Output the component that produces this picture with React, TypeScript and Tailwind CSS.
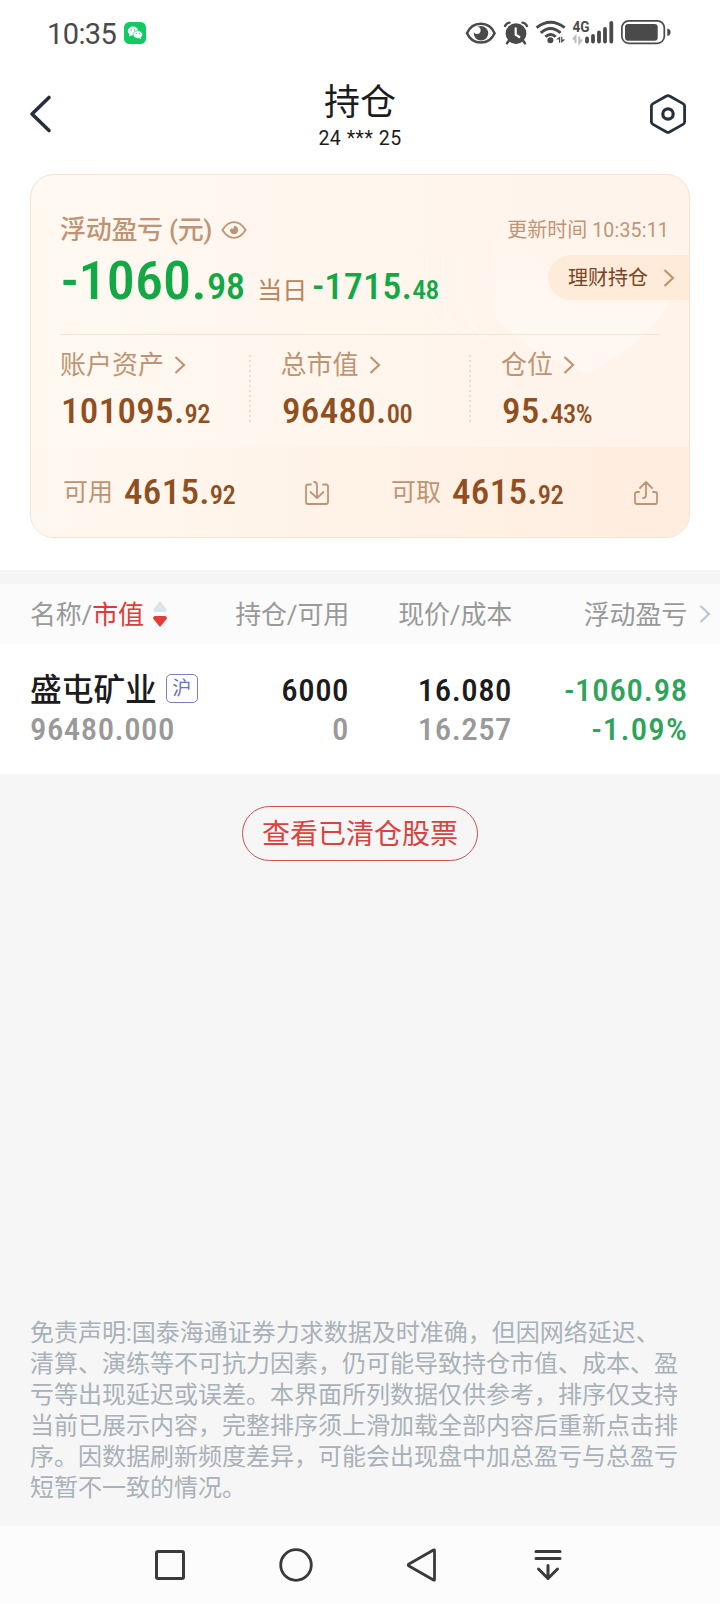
import type { ReactNode } from "react";

interface AmountProps {
  int: string;
  dec: string;
}

const disclaimer = [
  "免责声明:国泰海通证券力求数据及时准确，但因网络延迟、",
  "清算、演练等不可抗力因素，仍可能导致持仓市值、成本、盈",
  "亏等出现延迟或误差。本界面所列数据仅供参考，排序仅支持",
  "当前已展示内容，完整排序须上滑加载全部内容后重新点击排",
  "序。因数据刷新频度差异，可能会出现盘中加总盈亏与总盈亏",
  "短暂不一致的情况。",
];

const positions = [
  {
    name: "盛屯矿业",
    market: "沪",
    value: "96480.000",
    held: "6000",
    available: "0",
    price: "16.080",
    cost: "16.257",
    profit: "-1060.98",
    rate: "-1.09%",
  },
];

function Chevron({ className }: { className: string }) {
  return (
    <svg className={className} width="12" height="20" viewBox="0 0 12 20" fill="none" stroke="currentColor" strokeWidth="2.2">
      <path d="M1.5 2 L10 10 L1.5 18" />
    </svg>
  );
}

function StatusIcons() {
  return (
    <svg width="208" height="28" viewBox="0 0 208 28" fill="none" stroke="#4a4a4a">
      {/* Eye comfort */}
      <path d="M3 15.2 C8.5 2.6 25.2 2.6 30.6 15.2 C25.2 27.6 8.5 27.6 3 15.2 Z" strokeWidth="2.5" />
      <circle cx="17" cy="15.3" r="7.2" fill="#4a4a4a" stroke="none" />
      <circle cx="13" cy="12.3" r="3.6" fill="#fff" stroke="none" />

      {/* Alarm */}
      <circle cx="52" cy="15.6" r="10.4" fill="#4a4a4a" stroke="none" />
      <path d="M41 8 Q42.5 5 45.5 4.6 M63 8 Q61.5 5 58.5 4.6 M45 22.5 L43 25.3 M59 22.5 L61 25.3" strokeWidth="2.4" strokeLinecap="round" />
      <path d="M51.7 10.3 V16.6 L55.3 19" stroke="#fff" strokeWidth="2.2" strokeLinecap="round" />

      {/* Wifi */}
      <path d="M72.6 9.6 Q86.5 -1.2 100.6 9.6 M76.8 14.8 Q86.5 6.2 96.6 14.8 M81.4 18.8 Q86.5 14 91.8 18.8" strokeWidth="2.9" />
      <circle cx="86.4" cy="22.2" r="3" fill="#4a4a4a" stroke="none" />
      <path d="M92.3 21.6 L96.2 18.3 V24.8 H95 V21.6 Z M97.2 18.8 H98.3 V21.6 H101.3 L97.2 25 Z" fill="#4a4a4a" stroke="none" />

      {/* Mobile signal */}
      <text x="108.5" y="14" textLength="17" lengthAdjust="spacingAndGlyphs" fill="#4a4a4a" stroke="none" className="font-['Roboto',sans-serif] text-[15.5px] font-bold">
        4G
      </text>
      <path d="M111.5 25 V18.5 L109 21.5 M115.3 18.5 V25 L118 21.5" stroke="#bdbdbd" strokeWidth="2" />
      <path d="M123 20.5 V23.6 M129 18 V23.6 M135 14.5 V23.6 M141 11 V23.6 M147.3 4.8 V23.6" strokeWidth="3.8" strokeLinecap="round" />

      {/* Battery */}
      <rect x="157.9" y="2.9" width="42.4" height="22.4" rx="7" strokeWidth="1.7" />
      <rect x="161" y="6" width="32.7" height="16.7" rx="3" fill="#4a4a4a" stroke="none" />
      <path d="M203.3 10.5 Q206.6 11 206.6 14 Q206.6 17.5 203.3 18 Z" fill="#4a4a4a" stroke="none" />
    </svg>
  );
}

function StatusBar() {
  return (
    <div className="flex h-[68px] items-center pl-[47px] pr-12 text-[#4a4a4a]">
      <span className="w-[77px] text-[29px] leading-[68px] tracking-[-0.6px]">10:35</span>
      <svg className="mb-0.5 shrink-0" width="22" height="22" viewBox="0 0 22 22">
        <rect width="22" height="22" rx="5.5" fill="#0fcb62" />
        <ellipse cx="9" cy="9" rx="5.3" ry="4.4" fill="#fff" />
        <path d="M5.5 12 L5 14.6 L8 13 Z" fill="#fff" />
        <ellipse cx="13.8" cy="12.6" rx="4.7" ry="3.9" fill="#fff" stroke="#0fcb62" strokeWidth="0.7" />
        <path d="M15 16 L17 17.3 L16.8 15 Z" fill="#fff" />
        <g fill="#0fcb62">
          <circle cx="7.2" cy="7.9" r="0.7" />
          <circle cx="10.6" cy="7.9" r="0.7" />
          <circle cx="12.3" cy="11.6" r="0.6" />
          <circle cx="15.3" cy="11.6" r="0.6" />
        </g>
      </svg>
      <div className="mb-1 ml-auto">
        <StatusIcons />
      </div>
    </div>
  );
}

function Header() {
  return (
    <header className="mb-3.5 flex h-[92px] items-center justify-between pl-7 pr-8 text-[#26303a]">
      <svg width="40" height="40" viewBox="0 0 40 40" fill="none" stroke="currentColor" strokeWidth="3.6" strokeLinecap="round" strokeLinejoin="round">
        <path d="M21 3.5 L4 20 L21 36.5" />
      </svg>
      <div className="flex flex-col items-center pl-1 pt-1.5 text-[#1c1c1c]">
        <h1 className="text-[36px] leading-10">持仓</h1>
        <p className="mt-1 text-[19.5px] leading-6 tracking-[0.5px]">24 *** 25</p>
      </div>
      <svg width="40" height="44" viewBox="0 0 40 44" fill="none" stroke="currentColor" strokeWidth="2.8" strokeLinejoin="round">
        <path d="M18.5 4 Q20 3.1 21.5 4 L35 11.6 Q36.6 12.5 36.6 14.2 V29.8 Q36.6 31.5 35 32.4 L21.5 40 Q20 40.9 18.5 40 L5 32.4 Q3.4 31.5 3.4 29.8 V14.2 Q3.4 12.5 5 11.6 Z" />
        <circle cx="20" cy="22" r="5.2" strokeWidth="3.2" />
      </svg>
    </header>
  );
}

function Amount({ int, dec }: AmountProps) {
  return (
    <span className="inline-block origin-left scale-x-[1.06] whitespace-nowrap text-[35px] font-medium leading-10 tracking-[0.25px] text-[#8f4f20] [font-stretch:75%]">
      {int}.<span className="text-[25px] tracking-[-0.5px]">{dec}</span>
    </span>
  );
}

function Stat({ label, children }: { label: string; children: ReactNode }) {
  return (
    <div className="w-[220.5px] shrink-0">
      <div className="flex items-center text-[26px] leading-9 text-[#bf9474]">
        {label}
        <Chevron className="ml-2.5" />
      </div>
      <div className="mt-[9px] flex h-10 pl-px">{children}</div>
    </div>
  );
}

function DottedLine() {
  return (
    <svg className="-ml-8 mr-[30px] mt-[7px] shrink-0" width="2" height="68" viewBox="0 0 2 68">
      <path d="M1 1 V68" stroke="#eddccb" strokeWidth="2" strokeDasharray="2 3" />
    </svg>
  );
}

function SummaryCard() {
  return (
    <section className="relative mx-[30px] h-[364px] overflow-hidden rounded-3xl border border-[#f3e4cd] bg-gradient-to-r from-[#fff9f1] to-[#fff3ea]">
      {/* Background shield */}
      <svg className="absolute left-[390px] top-10" width="268" height="180" viewBox="0 0 268 180" fill="none">
        <defs>
          <linearGradient id="shield" x1="0" y1="0" x2="0" y2="1">
            <stop offset="0" stopColor="#fff7f0" stopOpacity="0" />
            <stop offset="0.6" stopColor="#fff7f1" />
          </linearGradient>
        </defs>
        <path d="M70 0 V85 Q74 125 165 158 Q240 125 260 60 V0 Z" fill="url(#shield)" />
        <path d="M42 40 V82 Q44 110 66 124 M22 40 V82 Q24 108 46 120 M6 40 V78 Q8 100 26 116" stroke="#fff9f4" strokeWidth="1.5" />
      </svg>

      <div className="relative pl-[29px] pt-[35px]">
        <div className="flex h-10 items-center text-[#bf9474]">
          <span className="w-[161px] whitespace-nowrap text-[26px] font-medium leading-10 tracking-[-0.3px]">浮动盈亏 (元)</span>
          <svg width="26" height="20" viewBox="0 0 28 20" fill="none" stroke="currentColor" strokeWidth="2">
            <path d="M1.5 10 Q7 1.5 14 1.5 Q21 1.5 26.5 10 Q21 18.5 14 18.5 Q7 18.5 1.5 10 Z" />
            <path d="M14 5.5 A4.5 4.5 0 1 1 9.5 10 L11 8.5 Q14 9.5 14 5.5 Z" fill="currentColor" stroke="none" />
          </svg>
          <span className="ml-auto mr-5 text-[20px] leading-10">更新时间 <span className="text-[19.5px] tracking-[0.2px]">10:35:11</span></span>
        </div>

        <div className="flex h-[84px]">
          <p className="origin-left scale-x-[1.06] whitespace-nowrap pl-px text-[53px] font-medium leading-[63px] tracking-[0.1px] text-[#12a846] [font-stretch:75%]">
            -1060.<span className="text-[36.5px] tracking-[-0.7px]">98</span>
            <span className="ml-3 text-[24px] font-normal tracking-[-0.4px] text-[#b5875f]">当日</span>
            <span className="ml-[5px] text-[36px] tracking-[0.2px]">-1715.</span>
            <span className="text-[26px] tracking-[-0.5px]">48</span>
          </p>
          <div className="ml-auto mt-[5px] flex h-[45px] w-[141px] items-center rounded-l-full bg-[#ffebd9] pl-5 text-[20px] text-[#7a4524]">
            理财持仓
            <Chevron className="ml-[15px] text-[#c4926c]" />
          </div>
        </div>

        <div className="mr-[29px] h-px bg-[#f2e3d3]" />

        <div className="flex h-28 pt-3">
          <Stat label="账户资产">
            <Amount int="101095" dec="92" />
          </Stat>
          <DottedLine />
          <Stat label="总市值">
            <Amount int="96480" dec="00" />
          </Stat>
          <DottedLine />
          <Stat label="仓位">
            <Amount int="95" dec="43%" />
          </Stat>
        </div>
      </div>

      <div className="relative flex h-[91px] items-center bg-gradient-to-r from-[#fff8f0] to-[#ffeddf] pl-8 text-[25px] text-[#bf9474]">
        <div className="flex w-[241px] items-center">
          <span className="mr-[11px]">可用</span>
          <span className="flex pt-1"><Amount int="4615" dec="92" /></span>
        </div>
        <svg width="26" height="26" viewBox="0 0 26 26" fill="none" stroke="currentColor" strokeWidth="1.8" strokeLinecap="round" strokeLinejoin="round">
          <path d="M7 4.5 H4 Q2 4.5 2 6.5 V22 Q2 24 4 24 H22 Q24 24 24 22 V6.5 Q24 4.5 22 4.5 H19 M10 2 Q13 2 13 5 V18 M6.5 12 L13 18 L19.5 12" />
        </svg>
        <div className="ml-[61px] flex w-[242px] items-center">
          <span className="mr-[11px]">可取</span>
          <span className="flex pt-1"><Amount int="4615" dec="92" /></span>
        </div>
        <svg width="26" height="26" viewBox="0 0 26 26" fill="none" stroke="currentColor" strokeWidth="1.8" strokeLinecap="round" strokeLinejoin="round">
          <path d="M6 12 H4 Q2 12 2 14 V22 Q2 24 4 24 H22 Q24 24 24 22 V14 Q24 12 22 12 H20 M13 2 V15 Q13 18 10 18 M7 8 L13 2 L19 8" />
        </svg>
      </div>
    </section>
  );
}

function PositionTable() {
  return (
    <section className="mt-8 border-t-[14px] border-[#f5f5f5] bg-white">
      <div className="flex h-[60px] items-center bg-[#fbfbfb] pl-[30px] pt-0.5 text-[26px] tracking-[-0.2px] text-[#999999]">
        <div className="flex w-[158px] items-center">
          <span>名称/<span className="text-[#e03a3a]">市值</span></span>
          <svg className="mb-0.5 ml-[9px] shrink-0" width="14" height="26" viewBox="0 0 14 26">
            <path d="M7 0 L14 9 Q14 11 12 11 H2 Q0 11 0 9 Z" fill="#dde3e8" />
            <path d="M7 26 L0 17.5 Q0 15 2 15 H12 Q14 15 14 17.5 Z" fill="#e63a3a" />
          </svg>
        </div>
        <span className="w-[161px] text-right">持仓/可用</span>
        <span className="w-[163px] text-right">现价/成本</span>
        <span className="w-[175px] text-right">浮动盈亏</span>
        <Chevron className="mb-0.5 ml-3 text-[#b9c8d8]" />
      </div>

      {positions.map((p) => (
        <div key={p.name} className="flex h-[130px] pl-[30px] pt-[27px] text-[31px] font-medium leading-[39px] tracking-[0.45px] text-[#1c1c1c] [font-stretch:75%]">
          <div className="w-[178px]">
            <div className="flex h-[39px] items-center">
              <span className="whitespace-nowrap text-[31.7px] tracking-normal">{p.name}</span>
              <span className="mb-1 ml-[9px] flex h-[29px] w-8 shrink-0 items-center justify-center rounded-[5px] border border-[#7a7fc4] text-[19px] font-normal leading-none tracking-normal text-[#6a6fc8]">
                {p.market}
              </span>
            </div>
            <div className="origin-left scale-x-[1.06] text-[#999999]">{p.value}</div>
          </div>
          <div className="w-[141px] origin-right scale-x-[1.06] text-right">
            <div>{p.held}</div>
            <div className="text-[#999999]">{p.available}</div>
          </div>
          <div className="w-[163px] origin-right scale-x-[1.06] text-right">
            <div>{p.price}</div>
            <div className="text-[#999999]">{p.cost}</div>
          </div>
          <div className="w-44 origin-right scale-x-[1.06] text-right text-[#2fa35a]">
            <div className="tracking-[0.7px]">{p.profit}</div>
            <div className="tracking-[1.1px]">{p.rate}</div>
          </div>
        </div>
      ))}
    </section>
  );
}

function NavBar() {
  return (
    <nav className="flex h-[78px] items-center gap-[86px] bg-[#fcfcfc] pl-[150px] text-[#3a3a3a]">
      <svg width="40" height="40" viewBox="0 0 40 40" fill="none" stroke="currentColor" strokeWidth="3">
        <rect x="6.5" y="6.5" width="27" height="27" rx="1.5" />
      </svg>
      <svg width="40" height="40" viewBox="0 0 40 40" fill="none" stroke="currentColor" strokeWidth="2.8">
        <circle cx="20" cy="20" r="15.3" />
      </svg>
      <svg width="40" height="40" viewBox="0 0 40 40" fill="none" stroke="currentColor" strokeWidth="2.8" strokeLinejoin="round">
        <path d="M32.5 5.5 V34.5 Q32.5 35.5 31.5 35 L7 21 Q5.5 20 7 19 L31.5 5 Q32.5 4.5 32.5 5.5 Z" />
      </svg>
      <svg width="40" height="40" viewBox="0 0 40 40" fill="none" stroke="currentColor" strokeWidth="3" strokeLinecap="round" strokeLinejoin="round">
        <path d="M8 6.5 H32 M8 13.5 H32 M20 20.5 V33.5 M10.5 24 L20 33.5 L29.5 24" />
      </svg>
    </nav>
  );
}

export default function App() {
  return (
    <div className="flex h-[1604px] w-[720px] flex-col overflow-hidden bg-[#f6f6f6] font-['Roboto','Noto_Sans_CJK_SC',sans-serif]">
      <div className="bg-white">
        <StatusBar />
        <Header />
        <SummaryCard />
        <PositionTable />
      </div>

      <button className="mx-auto mt-8 h-[55px] w-[236px] rounded-full border border-[#c9504c] pt-0.5 text-[28px] text-[#d9433f]">
        查看已清仓股票
      </button>

      <div className="mb-[22px] ml-[30px] mt-auto text-[24px] leading-[31px] text-[#a9b1b9]">
        {disclaimer.map((line) => (
          <p key={line} className="whitespace-nowrap">{line}</p>
        ))}
      </div>

      <NavBar />
    </div>
  );
}
